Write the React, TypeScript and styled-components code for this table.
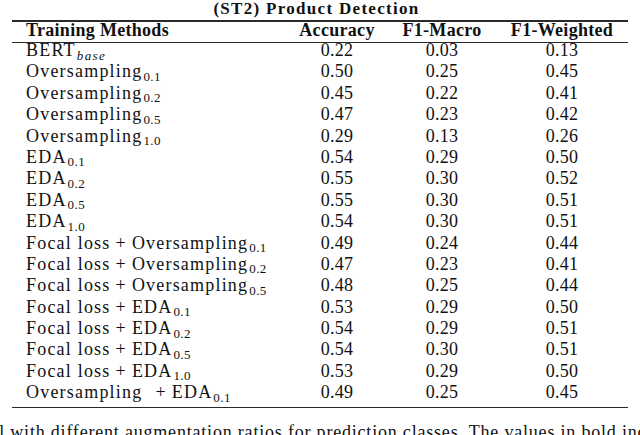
import styled, { createGlobalStyle } from "styled-components";

type Row = {
  prefix?: string;
  name: string;
  sub: string;
  italicSub?: boolean;
  wideGap?: boolean;
  values: [string, string, string];
};

const rows: Row[] = [
  { name: "BERT", sub: "base", italicSub: true, values: ["0.22", "0.03", "0.13"] },
  { name: "Oversampling", sub: "0.1", values: ["0.50", "0.25", "0.45"] },
  { name: "Oversampling", sub: "0.2", values: ["0.45", "0.22", "0.41"] },
  { name: "Oversampling", sub: "0.5", values: ["0.47", "0.23", "0.42"] },
  { name: "Oversampling", sub: "1.0", values: ["0.29", "0.13", "0.26"] },
  { name: "EDA", sub: "0.1", values: ["0.54", "0.29", "0.50"] },
  { name: "EDA", sub: "0.2", values: ["0.55", "0.30", "0.52"] },
  { name: "EDA", sub: "0.5", values: ["0.55", "0.30", "0.51"] },
  { name: "EDA", sub: "1.0", values: ["0.54", "0.30", "0.51"] },
  { prefix: "Focal loss", name: "Oversampling", sub: "0.1", values: ["0.49", "0.24", "0.44"] },
  { prefix: "Focal loss", name: "Oversampling", sub: "0.2", values: ["0.47", "0.23", "0.41"] },
  { prefix: "Focal loss", name: "Oversampling", sub: "0.5", values: ["0.48", "0.25", "0.44"] },
  { prefix: "Focal loss", name: "EDA", sub: "0.1", values: ["0.53", "0.29", "0.50"] },
  { prefix: "Focal loss", name: "EDA", sub: "0.2", values: ["0.54", "0.29", "0.51"] },
  { prefix: "Focal loss", name: "EDA", sub: "0.5", values: ["0.54", "0.30", "0.51"] },
  { prefix: "Focal loss", name: "EDA", sub: "1.0", values: ["0.53", "0.29", "0.50"] },
  { prefix: "Oversampling", name: "EDA", sub: "0.1", wideGap: true, values: ["0.49", "0.25", "0.45"] },
];

const headers = ["Accuracy", "F1-Macro", "F1-Weighted"];

export default function App() {
  return (
    <Page>
      <GlobalStyle />
      <Table>
        <Title>(ST2) Product Detection</Title>
        <Rule $weight={2} />
        <TableRow $height={20}>
          <HeadCell $left>Training Methods</HeadCell>
          {headers.map((h) => (
            <HeadCell key={h}>{h}</HeadCell>
          ))}
        </TableRow>
        <Rule $weight={1} />
        {rows.map((r, i) => (
          <TableRow key={i} $height={21.4}>
            <LabelCell>
              {r.prefix && (
                <>
                  {r.prefix}
                  <Plus $wide={r.wideGap}>+</Plus>
                </>
              )}
              {r.name}
              <Sub $italic={r.italicSub}>{r.sub}</Sub>
            </LabelCell>
            {r.values.map((v, j) => (
              <NumCell key={j}>{v}</NumCell>
            ))}
          </TableRow>
        ))}
        <Rule $weight={1.5} />
      </Table>
      <Caption>
        model with different augmentation ratios for prediction classes. The values in bold indicate the best
      </Caption>
    </Page>
  );
}

const GlobalStyle = createGlobalStyle`
  body {
    margin: 0;
    background: #fff;
    overflow: hidden;
  }
`;

const Page = styled.div`
  width: 640px;
  height: 435px;
  overflow: hidden;
  font-family: "Liberation Serif", "Times New Roman", serif;
  color: #111;
`;

const Table = styled.div`
  width: 616px;
  margin-left: 12px;
`;

const Title = styled.div`
  height: 17px;
  margin-bottom: 3px;
  padding-right: 7px;
  font-size: 17px;
  font-weight: bold;
  line-height: 17px;
  letter-spacing: 1.3px;
  text-align: center;
  white-space: nowrap;
`;

const Rule = styled.div<{ $weight: number }>`
  height: ${(p) => p.$weight}px;
  background: #2a2a2a;
`;

const TableRow = styled.div<{ $height: number }>`
  display: grid;
  grid-template-columns: 278px 94px 116px 1fr;
  padding-right: 4px;
  height: ${(p) => p.$height}px;
  line-height: 14px;
  align-items: start;
`;

const HeadCell = styled.div<{ $left?: boolean }>`
  font-size: 18px;
  font-weight: bold;
  letter-spacing: 0.3px;
  white-space: nowrap;
  text-align: ${(p) => (p.$left ? "left" : "center")};
  padding-left: ${(p) => (p.$left ? "14px" : "0")};
  padding-top: 0.5px;
`;

const LabelCell = styled.div`
  padding-left: 14px;
  font-size: 18px;
  letter-spacing: 1.2px;
  white-space: nowrap;
`;

const Plus = styled.span<{ $wide?: boolean }>`
  padding: 0 5px 0 ${(p) => (p.$wide ? "13px" : "5px")};
`;

const Sub = styled.span<{ $italic?: boolean }>`
  font-size: 13px;
  font-style: ${(p) => (p.$italic ? "italic" : "normal")};
  letter-spacing: ${(p) => (p.$italic ? "1.4px" : "0.4px")};
  line-height: 0;
  vertical-align: -3.5px;
  margin-left: 1px;
`;

const NumCell = styled.div`
  font-size: 18px;
  letter-spacing: 0.3px;
  text-align: center;
`;

const Caption = styled.div`
  margin-top: 17px;
  font-size: 18px;
  line-height: 14px;
  letter-spacing: 0.8px;
  text-indent: -44px;
  white-space: nowrap;
`;
